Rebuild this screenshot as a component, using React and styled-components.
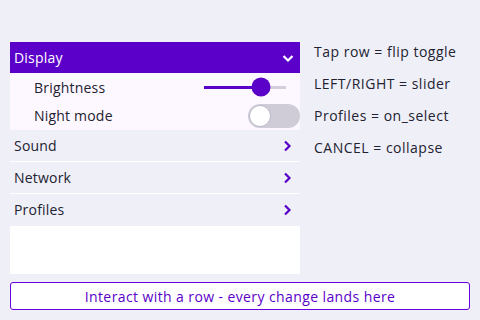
import React, { useState } from "react";
import styled, { createGlobalStyle } from "styled-components";

const GlobalStyle = createGlobalStyle`
  html, body {
    margin: 0;
    padding: 0;
    background: #efeff8;
    font-family: "Open Sans", "Noto Sans", sans-serif;
  }
`;

const Screen = styled.div`
  width: 480px;
  height: 320px;
  box-sizing: border-box;
  padding: 42px 10px 0 10px;
  display: flex;
  flex-direction: column;
`;

const Main = styled.div`
  display: flex;
  gap: 14px;
`;

const Menu = styled.div`
  width: 290px;
  display: flex;
  flex-direction: column;
`;

const Header = styled.div`
  height: 31px;
  background: #5b00c9;
  color: #ffffff;
  display: flex;
  align-items: center;
  justify-content: space-between;
  padding: 0 6px 0 4px;
  font-size: 14px;
  letter-spacing: 0.2px;
`;

const SubRow = styled.div`
  height: ${(p) => p.$h}px;
  background: #fdf8ff;
  display: flex;
  align-items: center;
  justify-content: space-between;
  padding-left: 24px;
  font-size: 14px;
  letter-spacing: 0.2px;
  color: #222230;
  overflow: hidden;
`;

const Row = styled.div`
  height: 31px;
  display: flex;
  align-items: center;
  justify-content: space-between;
  padding: 0 7px 0 4px;
  font-size: 14px;
  letter-spacing: 0.2px;
  color: #222230;
  border-bottom: 1px solid ${(p) => (p.$last ? "transparent" : "#ffffff")};
`;

const Filler = styled.div`
  height: 48px;
  background: #ffffff;
`;

const Slider = styled.div`
  position: relative;
  width: 82px;
  height: 3px;
  margin-right: 14px;
  background: #d2cedb;
`;

const SliderFill = styled.div`
  height: 100%;
  background: #5b00c9;
`;

const Knob = styled.div`
  position: absolute;
  top: 50%;
  width: 19px;
  height: 19px;
  border-radius: 50%;
  background: #5b00c9;
  transform: translate(-50%, -50%);
`;

const Toggle = styled.div`
  position: relative;
  width: 52px;
  height: 24px;
  border-radius: 12px;
  background: ${(p) => (p.$on ? "#5b00c9" : "#cfccd8")};
  flex-shrink: 0;
`;

const ToggleKnob = styled.div`
  position: absolute;
  top: 1px;
  left: ${(p) => (p.$on ? "29px" : "1px")};
  width: 20px;
  height: 20px;
  border-radius: 50%;
  background: #ffffff;
  border: 1px solid #bdbac8;
`;

const Help = styled.div`
  display: flex;
  flex-direction: column;
  gap: 13px;
  padding-top: 0;
  font-size: 14px;
  letter-spacing: 0.5px;
  color: #222230;
`;

const HelpLine = styled.div`
  height: 19px;
  line-height: 19px;
`;

const Status = styled.div`
  margin-top: 8px;
  height: 26px;
  border: 1px solid #6a00e0;
  border-radius: 3px;
  background: #ffffff;
  color: #5b00c9;
  font-size: 14px;
  letter-spacing: 0.4px;
  display: flex;
  align-items: center;
  justify-content: center;
`;

const Chevron = ({ down, color }) => (
  <svg width="12" height="12" viewBox="0 0 12 12">
    <path
      d={down ? "M1.5 4 L6 8.5 L10.5 4" : "M4 1.5 L8.5 6 L4 10.5"}
      fill="none"
      stroke={color}
      strokeWidth="2.2"
      strokeLinejoin="miter"
    />
  </svg>
);

export default function App() {
  const [level] = useState(70);
  const [night, setNight] = useState(false);

  return (
    <>
      <GlobalStyle />
      <Screen>
        <Main>
          <Menu>
            <Header>
              <span>Display</span>
              <Chevron down color="#ffffff" />
            </Header>
            <SubRow $h={28}>
              <span>Brightness</span>
              <Slider>
                <SliderFill style={{ width: `${level}%` }} />
                <Knob style={{ left: `${level}%` }} />
              </Slider>
            </SubRow>
            <SubRow $h={29} onClick={() => setNight(!night)}>
              <span>Night mode</span>
              <Toggle $on={night}>
                <ToggleKnob $on={night} />
              </Toggle>
            </SubRow>
            <Row>
              <span>Sound</span>
              <Chevron color="#5b00c9" />
            </Row>
            <Row>
              <span>Network</span>
              <Chevron color="#5b00c9" />
            </Row>
            <Row $last>
              <span>Profiles</span>
              <Chevron color="#5b00c9" />
            </Row>
            <Filler />
          </Menu>
          <Help>
            <HelpLine>Tap row = flip toggle</HelpLine>
            <HelpLine>LEFT/RIGHT = slider</HelpLine>
            <HelpLine>Profiles = on_select</HelpLine>
            <HelpLine>CANCEL = collapse</HelpLine>
          </Help>
        </Main>
        <Status>Interact with a row - every change lands here</Status>
      </Screen>
    </>
  );
}
